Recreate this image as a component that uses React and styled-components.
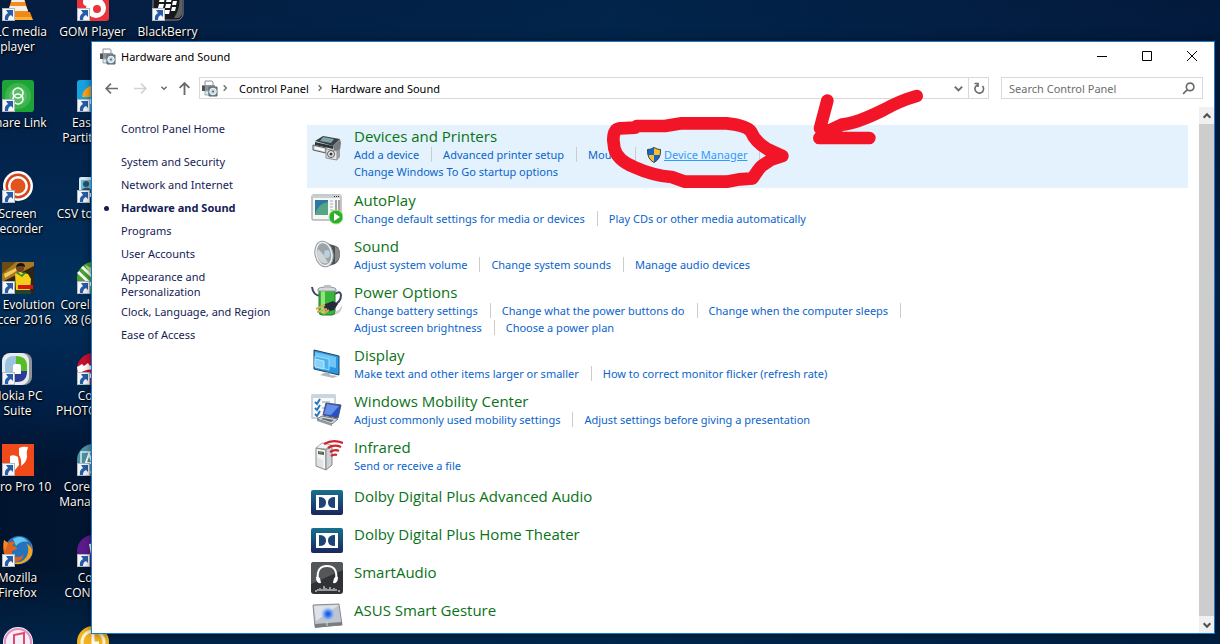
import React, {useState} from 'react';
import styled, {createGlobalStyle} from 'styled-components';

const GlobalStyle = createGlobalStyle`
    * {
        box-sizing: border-box;
    }
    body {
        margin: 0;
        overflow: hidden;
        font-family: "Noto Sans", "Open Sans", sans-serif;
        font-size: 11px;
    }
    button {
        font: inherit;
        border: 0;
        padding: 0;
        background: none;
        color: inherit;
    }
    svg {
        display: block;
        flex: none;
    }
`

const Desktop = styled.main`
    position: relative;
    height: 100vh;
    overflow: hidden;
    background: linear-gradient(90deg, rgba(0, 30, 70, 0) 0%, rgba(0, 44, 84, 0.5) 50%, rgba(0, 20, 50, 0.3) 100%),
        linear-gradient(180deg, #041c40 0%, #02224a 22%, #01305c 45%, #012048 62%, #011430 72%, #01142e 88%, #012347 100%);
`
const Shortcuts = styled.div`
    display: grid;
    grid-template-columns: repeat(3, 75px);
    grid-auto-rows: 91px;
    margin: -11px 0 0 -20px;
`
const Shortcut = styled.button`
    grid-column: ${(p) => p.$col};
    grid-row: ${(p) => p.$row};
    display: flex;
    flex-direction: column;
    align-items: center;
    gap: 3px;
    color: white;
    font-family: "Open Sans", "Noto Sans", sans-serif;
    font-size: 12px;
    line-height: 15px;
    text-shadow: 1px 1px 2px black, 0 1px 2px black;
    white-space: pre;
`
const Window = styled.section`
    position: absolute;
    top: 41px;
    right: 5px;
    bottom: 10px;
    left: 91px;
    display: flex;
    flex-direction: column;
    background: white;
    border: 1px solid #1979ca;
    box-shadow: 0 0 8px rgba(0, 0, 0, 0.5);
`
const TitleBar = styled.header`
    display: flex;
    align-items: center;
    height: 28px;
    padding-left: 7px;
    gap: 5px;
`
const WindowTitle = styled.h1`
    flex: 1;
    margin: 0;
    font-size: 11px;
    font-weight: normal;
    color: black;
`
const Caption = styled.div`
    display: flex;
    align-self: stretch;
`
const CaptionButton = styled.button`
    display: grid;
    place-items: center;
    width: 45px;
    &:hover{
        background: #e5e5e5;
    }
`
const NavBar = styled.div`
    display: flex;
    align-items: center;
    padding: 7px 11px 0 9px;
`
const NavButton = styled.button`
    display: grid;
    place-items: center;
    width: ${(p) => p.$w}px;
    height: 22px;
`
const AddressBar = styled.div`
    flex: 1;
    display: flex;
    align-items: center;
    height: 22px;
    padding-left: 1px;
    border: 1px solid #d9d9d9;
`
const Crumb = styled.button`
    margin: 0 7px;
    color: black;
`
const AddressButton = styled.button`
    display: grid;
    place-items: center;
    width: 20px;
    height: 20px;
    margin-left: ${(p) => (p.$end ? 'auto' : '0')};
    border-left: ${(p) => (p.$end ? '0' : '1px solid #d9d9d9')};
`
const SearchBox = styled.form`
    display: flex;
    align-items: center;
    width: 202px;
    height: 22px;
    margin-left: 12px;
    padding: 0 7px;
    border: 1px solid #d9d9d9;
`
const SearchInput = styled.input`
    flex: 1;
    min-width: 0;
    padding: 0;
    border: 0;
    outline: 0;
    font: inherit;
    color: #333;
    &::placeholder{
        color: #6d6d6d;
        opacity: 1;
    }
`
const Body = styled.div`
    flex: 1;
    display: flex;
    min-height: 0;
    margin-top: 6px;
`
const Sidebar = styled.nav`
    width: 215px;
    padding: 16px 20px 0 29px;
    flex: none;
`
const SideList = styled.ul`
    list-style: none;
    margin: 18px 0 0;
    padding: 0;
`
const SideItem = styled.li`
    position: relative;
    margin-bottom: ${(p) => (p.$tight ? '5px' : '8px')};
    line-height: 15px;
    white-space: pre-line;
    &::before{
        content: '';
        display: ${(p) => (p.$current ? 'block' : 'none')};
        position: absolute;
        top: 6px;
        left: -17px;
        width: 5px;
        height: 5px;
        border-radius: 50%;
        background: #151c55;
    }
`
const SideLink = styled.a`
    color: #151c55;
    font-weight: ${(p) => (p.$current ? 'bold' : 'normal')};
    line-height: 15px;
    text-decoration: none;
    white-space: ${(p) => (p.$current ? 'nowrap' : 'inherit')};
`
const Categories = styled.div`
    flex: 1;
    min-width: 0;
    padding: 20px 11px 0 0;
    overflow: hidden;
`
const Category = styled.section`
    display: flex;
    gap: 11px;
    padding: 2px 0 8px 4px;
    margin-bottom: ${(p) => (p.$active ? '1px' : '0')};
    background: ${(p) => (p.$active ? '#e3f2fd' : 'none')};
`
const CategoryIcon = styled.div`
    height: 34px;
    padding-top: 2px;
    margin-bottom: -2px;
`
const Extras = styled.div`
    padding-top: 3px;
`
const Extra = styled.section`
    display: flex;
    gap: 11px;
    height: 38px;
    padding: 1px 0 0 4px;
`
const CategoryTitle = styled.h2`
    margin: 0 0 1px;
    font-family: "Open Sans", "Noto Sans", sans-serif;
    font-size: 15px;
    font-weight: normal;
    line-height: ${(p) => (p.$alone ? '20px' : '18px')};
    a {
        color: #0a7216;
        text-decoration: none;
    }
`
const TaskRow = styled.div`
    display: flex;
    align-items: center;
    height: 17px;
    white-space: nowrap;
`
const Task = styled.a`
    display: flex;
    align-items: center;
    gap: 3px;
    color: ${(p) => (p.$hot ? '#3399ff' : '#0a64cc')};
    text-decoration: ${(p) => (p.$hot ? 'underline' : 'none')};
    line-height: 17px;
    &:hover{
        text-decoration: underline;
    }
`
const Divider = styled.span`
    width: 1px;
    height: 15px;
    margin: 0 11px 0 12px;
    background: #cccccc;
`
const ScrollBar = styled.div`
    display: flex;
    flex-direction: column;
    width: 15px;
    padding-top: 2px;
`
const ScrollButton = styled.button`
    display: grid;
    place-items: center;
    height: 17px;
    background: #f0f0f0;
`
const ScrollThumb = styled.div`
    flex: 1;
    background: #cdcdcd;
`
const Marker = styled.svg`
    position: absolute;
    top: 80px;
    left: 590px;
    pointer-events: none;
    fill: none;
    stroke: #f21528;
    stroke-width: 38;
    stroke-linecap: round;
    stroke-linejoin: round;
`

// desktop pictures, all on a 32x32 grid
const pictures = {
    vlc: <>
        <path d="M13 0h6l8 25H5z" fill="#f58a1f"/>
        <path d="M11 7h10l2 6H9z" fill="#eee"/><path d="M8 17h16l2 5H6z" fill="#f3f0ec"/>
        <path d="M4 23h24l3 8H1z" fill="#f08a12"/><path d="M3 28h26l2 3H1z" fill="#ffb03c"/>
    </>,
    gom: <>
        <rect width="32" height="32" rx="3" fill="#e8343a"/>
        <circle cx="19" cy="19" r="10" fill="#fff"/><circle cx="20" cy="20" r="4" fill="#e8343a"/>
        <circle cx="10" cy="13" r="4" fill="#fff"/>
    </>,
    blackberry: <>
        <rect x="1" width="30" height="31" rx="6" fill="#17191b" stroke="#888" strokeWidth="1"/>
        <path d="M25 2c4 8 3 18-3 27h4q4-1 4-5V6q0-3-5-4z" fill="#5d6063"/>
        <g fill="#fff">
            <path d="M8 9h5l-1 4H7zM15 9h5l-1 4h-5zM7 15h5l-1 4H6zM14 15h5l-1 4h-5zM21 12h4l-1 4h-4zM20 18h4l-1 4h-4zM13 21h5l-1 4h-5z"/>
        </g>
    </>,
    share: <>
        <rect width="32" height="32" rx="3" fill="#1ea336"/>
        <circle cx="16" cy="16" r="13" fill="#3cb44d"/><circle cx="16" cy="16" r="9" fill="#55c063"/>
        <g fill="none" stroke="#fff" strokeWidth="1.5"><circle cx="16" cy="13" r="5"/><circle cx="16" cy="19" r="5"/></g>
    </>,
    easeus: <>
        <rect width="32" height="32" rx="3" fill="#17a3e0"/>
        <path d="M5 17A12 12 0 0 1 20 6l-4 11z" fill="#f9a51c"/>
        <path d="M6 19h20v5H6z" fill="#d9f1fb"/>
    </>,
    recorder: <>
        <circle cx="16" cy="15" r="15" fill="#fff"/><circle cx="16" cy="15" r="12.500" fill="#d64319"/>
        <circle cx="16" cy="15" r="10" fill="#fff"/><circle cx="16" cy="15" r="7.500" fill="#e1531f"/>
    </>,
    csv: <>
        <rect x="2" y="6" width="28" height="20" rx="2" fill="#d7ecf5"/>
        <rect x="4" y="9" width="11" height="13" fill="#6fb8d8"/>
        <circle cx="9" cy="13" r="3" fill="#24536b"/><path d="M4 22c0-7 11-7 11 0z" fill="#24536b"/>
    </>,
    soccer: <>
        <rect width="32" height="32" fill="#302515"/>
        <path d="M0 0h32v4L0 20z" fill="#a97a1e"/><path d="M0 0h14L0 12z" fill="#6b4c12"/><path d="M2 12l14-7v3L3 16z" fill="#f0cd62"/>
        <circle cx="18" cy="6" r="4" fill="#6d4124"/><path d="M14 5q1-4 5-4t4 4q-4-2-9 0z" fill="#1b120c"/>
        <path d="M13 12l5-2 8 2 3 5-1 11-14 1z" fill="#f3cf18"/><path d="M16 10l3 3 4-3 1 1-4 4-6-4z" fill="#238a3c"/>
        <path d="M16 23h15v4H16z" fill="#d3181a"/><path d="M13 28h16v4H13z" fill="#23452c"/>
    </>,
    draw: <>
        <circle cx="16" cy="16" r="16" fill="#48a52d"/>
        <path d="M1 10l20 19M5 5l22 20" stroke="#fff" strokeWidth="3"/><path d="M8 3l9 4-3 6z" fill="#b7e08c"/>
    </>,
    nokia: <>
        <rect x="4" y="0" width="26" height="32" rx="8" fill="#8f9497"/>
        <rect x="0" y="0" width="27" height="32" rx="8" fill="#e9ecee"/>
        <path d="M3 12q0-9 9-9h2v8q-3 0-3 5v5H3z" fill="#9bc2df"/>
        <path d="M14 3q11 0 11 10v8h-6v-6q0-4-5-4z" fill="#57bd27"/>
        <path d="M11 21h8v-3h6q0 11-10 11h-4z" fill="#2d3b98"/><rect x="11" y="11" width="8" height="10" rx="2" fill="#fff"/>
    </>,
    photo: <>
        <circle cx="16" cy="16" r="16" fill="#c8102e"/>
        <path d="M0 14l5-3 2 2 4-3 2 3 5-4v8q-8-2-17 4z" fill="#fff"/><path d="M4 25q6-6 12-4v4z" fill="#fff"/>
    </>,
    nitro: <>
        <rect width="32" height="32" fill="#f04a1a"/>
        <path d="M17 4q4-2 9-1-2 5-1 10-1 6-6 9 1-6-2-11z" fill="#fff"/><path d="M8 12q4-2 8 1l1 8-4 5q-1-3-5-5z" fill="#fff"/>
    </>,
    font: <>
        <circle cx="16" cy="16" r="16" fill="#4a93a3"/>
        <path d="M4 8h15v20H4z" fill="none" stroke="#d6eef1" strokeWidth="1.500"/>
        <path d="M7 24l5-14 5 14M9 19h6" fill="none" stroke="#fff" strokeWidth="2"/>
    </>,
    firefox: <>
        <circle cx="17" cy="15" r="14" fill="#2473bd"/><path d="M11 4q9-5 15 3-7-2-12 4z" fill="#66c5ec"/>
        <path d="M2 5l4 3q3-2 7-1l-3 4q5 0 5 3l-5 2q-1 6 5 6 5 0 7-3-2 8-10 8C4 27-1 17 2 5z" fill="#e2621c"/>
        <path d="M29 8q5 15-8 20-7 3-13-1 15 3 18-9 1-5-1-9 3 1 5 6z" fill="#f9a41b"/>
        <path d="M2 5l4 3-3 8q-2-5-1-11z" fill="#f68a1e"/>
    </>,
    connect: <>
        <circle cx="16" cy="16" r="16" fill="#5c1c8c"/>
        <path d="M12 9q8-2 10 5l-8 6z" fill="#fff"/>
    </>,
    itunes: <>
        <circle cx="16" cy="16" r="15" fill="#f4eef6"/><circle cx="16" cy="16" r="13" fill="none" stroke="#e58fc0" strokeWidth="2"/>
        <path d="M12 21V9l10-2v12" fill="none" stroke="#e0486f" strokeWidth="2"/>
    </>,
    clock: <>
        <circle cx="16" cy="16" r="16" fill="#f2b321"/><circle cx="16" cy="16" r="11" fill="none" stroke="#fff3cf" strokeWidth="3"/>
        <path d="M16 8v9h6" fill="none" stroke="#fff" strokeWidth="3"/>
    </>,
}

const shortcuts = [
    {col: 1, row: 1, pic: 'vlc', label: 'VLC media\nplayer'},
    {col: 2, row: 1, pic: 'gom', label: 'GOM Player'},
    {col: 3, row: 1, pic: 'blackberry', label: 'BlackBerry'},
    {col: 1, row: 2, pic: 'share', label: 'Share Link'},
    {col: 2, row: 2, pic: 'easeus', label: 'EaseUS\nPartition ...'},
    {col: 1, row: 3, pic: 'recorder', label: 'Screen\nRecorder'},
    {col: 2, row: 3, pic: 'csv', label: 'CSV to vCard'},
    {col: 1, row: 4, pic: 'soccer', label: 'Pro Evolution\nSoccer 2016'},
    {col: 2, row: 4, pic: 'draw', label: 'CorelDRAW\nX8 (64-Bit)'},
    {col: 1, row: 5, pic: 'nokia', label: 'Nokia PC\nSuite'},
    {col: 2, row: 5, pic: 'photo', label: 'Corel\nPHOTO-PAI...'},
    {col: 1, row: 6, pic: 'nitro', label: 'Nitro Pro 10'},
    {col: 2, row: 6, pic: 'font', label: 'Corel Font\nManager X8'},
    {col: 1, row: 7, pic: 'firefox', label: 'Mozilla\nFirefox'},
    {col: 2, row: 7, pic: 'connect', label: 'Corel\nCONNECT'},
    {col: 1, row: 8, pic: 'itunes', label: ''},
    {col: 2, row: 8, pic: 'clock', label: ''},
]

const sideLinks = [
    'System and Security',
    'Network and Internet',
    'Hardware and Sound',
    'Programs',
    'User Accounts',
    'Appearance and\nPersonalization',
    'Clock, Language, and Region',
    'Ease of Access',
]

// control panel pictures
const icons = {
    printers: <>
        <path d="M3 8l8-5 17 3-7 7z" fill="#3c4144"/><path d="M11 4l11 2-3 4-11-2z" fill="#7fa5a8"/>
        <path d="M3 9l18 4v3L3 12z" fill="#2e3336"/><path d="M21 13l7-7 1 4-1 7-6 2z" fill="#767c80"/>
        <path d="M1 12l13 3v5L1 17z" fill="#d9dcdd" stroke="#55595b"/><path d="M3 14l9 2v2l-9-2z" fill="#fff"/>
        <path d="M14 16l11 2v9l-11-2z" fill="#e2e4e5" stroke="#8b9092"/><circle cx="19" cy="21" r="3.500" fill="#eee" stroke="#555"/>
        <circle cx="19" cy="21" r="1.500" fill="#333"/><path d="M25 18l3-2v8l-3 3z" fill="#9a9fa2"/>
    </>,
    autoplay: <>
        <rect x="1" y="2" width="29" height="25" rx="1" fill="#f6f7f7" stroke="#8c8f91"/>
        <path d="M1 2h29v3H1z" fill="#c9ced1"/><path d="M23 3h1v1h-1zM25 3h1v1h-1zM27 3h1v1h-1z" fill="#333"/>
        <rect x="4" y="7" width="13" height="15" fill="#2f78a5"/><path d="M4 22q2-11 13-13v13z" fill="#56a583"/>
        <path d="M19 8h3M19 11h3M19 14h3M19 17h3M19 20h3" stroke="#a6afb5"/><path d="M25 7v12M28 7v12" stroke="#888" strokeWidth="1.500"/>
        <circle cx="25" cy="24" r="7" fill="#2eae29" stroke="#a8e28e"/><path d="M23 20l6 4-6 4z" fill="#fff"/>
    </>,
    sound: <>
        <path d="M15 4l10 3q4 2 4 8 0 7-5 10l-9 3z" fill="#4c5053"/><path d="M24 7q5 3 5 8t-5 9z" fill="#85898b"/>
        <ellipse cx="13" cy="15" rx="9" ry="13" transform="rotate(-12 13 15)" fill="#eceeef" stroke="#96999b"/>
        <ellipse cx="13" cy="15" rx="7" ry="11" transform="rotate(-12 13 15)" fill="#9ba4a9"/>
        <path d="M7 10q7 6 10 14-7 2-10-5-2-5 0-9z" fill="#cfd4d7"/><ellipse cx="16" cy="15" rx="3" ry="4" fill="#b9d0da"/>
    </>,
    power: <>
        <path d="M1 2q1 8 8 9M24 9q5-4 6 1 0 7-7 10" fill="none" stroke="#404565" strokeWidth="2"/>
        <rect x="8" y="3" width="16" height="27" rx="3" fill="#36b53a" stroke="#237f2a"/><rect x="10" y="5" width="4" height="23" fill="#91e479"/>
        <path d="M7 4q1-2 9-2t9 2v2H7z" fill="#d5dadd" stroke="#92989c"/><rect x="13" y="0" width="7" height="3" rx="1" fill="#b7bec5"/>
        <path d="M12 20l10-4 5 3-4 6-8 2z" fill="#252b38"/><path d="M5 24l9-4M6 27l10-3M12 29l6-4" stroke="#d8ad56" strokeWidth="2"/>
        <path d="M24 30q8-3 7-10-2 5-7 7z" fill="#ccd0d2"/>
    </>,
    display: <>
        <path d="M3 2l25 6v19L3 21z" fill="#2898e4" stroke="#27435a"/><path d="M4 4l21 5v11L4 15z" fill="#70c5f5"/>
        <path d="M4 8l14 3v11L4 18z" fill="#4baff0" stroke="#9bdcff"/><path d="M4 11l9 2v8l-9-2z" fill="#89d1f8" stroke="#b6e8ff"/>
        <path d="M15 24l4 1v2l8 1-5 2-13-3z" fill="#b1b9be"/>
    </>,
    mobility: <>
        <rect x="1" y="1" width="23" height="23" fill="#f9fafb" stroke="#a1acb5"/><path d="M1 1h23v3H1z" fill="#c9d5df"/>
        <path d="M4 8l2 2 3-5M4 14l2 2 3-5M4 20l2 2 3-5" fill="none" stroke="#2676b8" strokeWidth="2"/>
        <path d="M11 8h8M11 14h5" stroke="#8d9ca8"/>
        <path d="M15 9l15 2-3 13-15-3z" fill="#2851c7" stroke="#4d5560"/><path d="M16 10l12 2-8 9-7-1z" fill="#6590ea"/>
        <path d="M11 22l16 3-6 5-15-5z" fill="#d6dade" stroke="#6f757b"/><path d="M12 24l11 2-3 2-10-3z" fill="#646c73"/><path d="M6 25l15 5v2L6 27z" fill="#9299a0"/>
    </>,
    infrared: <>
        <path d="M5 8l6-5 9 2-5 4z" fill="#f4f5f6" stroke="#aaa"/><path d="M5 8l10 2v20L5 26z" fill="#f3f4f5" stroke="#858789"/>
        <path d="M15 10l6-5v20l-6 5z" fill="#cfd2d4" stroke="#858789"/><path d="M7 11l6 1v3l-6-1z" fill="#59615c"/><path d="M8 12h3" stroke="#62d347"/>
        <path d="M7 18v8M9 19v8M11 20v8" stroke="#cdd0d1"/>
        <path d="M13 4q9-5 19-1M17 8q6-4 13-1M19 12q5-3 9-1M20 16q3-2 6-1" fill="none" stroke="#cc2631" strokeWidth="2.200"/>
    </>,
    dolby: <>
        <defs>
            <linearGradient id="dolbyBlue" x1="0" y1="0" x2="0" y2="1">
                <stop offset="0" stopColor="#18708e"/><stop offset="1" stopColor="#19265e"/>
            </linearGradient>
        </defs>
        <rect y="4" width="32" height="25" rx="2" fill="url(#dolbyBlue)"/>
        <rect x="5" y="9" width="22" height="15" fill="#fff"/>
        <path d="M8 11q7 0 7 5.500T8 22zM24 11q-7 0-7 5.500T24 22z" fill="#1b4478"/>
    </>,
    smart: <>
        <rect width="32" height="32" rx="3" fill="#303235"/><path d="M3 0h26q3 0 3 3v5L0 22V3q0-3 3-3z" fill="#54575a"/>
        <path d="M7 18q-2-14 9-14t9 14" fill="none" stroke="#fff" strokeWidth="2"/>
        <path d="M5 15q4-2 5 6-5 1-5-6zM27 15q-4-2-5 6 5 1 5-6z" fill="#fff"/>
        <path d="M4 29h2M7 29v-2M9 29v-3M11 29v-2M13 29v-5M15 29v-3M17 29v-2M19 29v-4M21 29v-2M23 29v-3M25 29v-2M27 29h2" stroke="#fff"/>
    </>,
    asus: <>
        <defs>
            <radialGradient id="touchGlow"><stop offset="0" stopColor="#0a43e5"/><stop offset="0.4" stopColor="#4b8af1"/><stop offset="1" stopColor="#bed7f6" stopOpacity="0"/></radialGradient>
        </defs>
        <path d="M2 5l26-1 3 21-27 2z" fill="#bfc5cc" stroke="#868b92"/><path d="M3 6l25-1-23 16z" fill="#dfe3e8"/>
        <path d="M4 24l27-2v3L4 28z" fill="#777d84"/><path d="M16 22v4" stroke="#d8dce0"/><circle cx="17" cy="14" r="8" fill="url(#touchGlow)"/>
    </>,
}

const categories = [
    {icon: 'printers', title: 'Devices and Printers', active: true, rows: [
        ['Add a device', 'Advanced printer setup', 'Mouse', 'Device Manager'],
        ['Change Windows To Go startup options'],
    ]},
    {icon: 'autoplay', title: 'AutoPlay', rows: [['Change default settings for media or devices', 'Play CDs or other media automatically']]},
    {icon: 'sound', title: 'Sound', rows: [['Adjust system volume', 'Change system sounds', 'Manage audio devices']]},
    {icon: 'power', title: 'Power Options', rows: [
        ['Change battery settings', 'Change what the power buttons do', 'Change when the computer sleeps'],
        ['Adjust screen brightness', 'Choose a power plan'],
    ]},
    {icon: 'display', title: 'Display', rows: [['Make text and other items larger or smaller', 'How to correct monitor flicker (refresh rate)']]},
    {icon: 'mobility', title: 'Windows Mobility Center', rows: [['Adjust commonly used mobility settings', 'Adjust settings before giving a presentation']]},
    {icon: 'infrared', title: 'Infrared', rows: [['Send or receive a file']]},
]

const extras = [
    {icon: 'dolby', title: 'Dolby Digital Plus Advanced Audio'},
    {icon: 'dolby', title: 'Dolby Digital Plus Home Theater'},
    {icon: 'smart', title: 'SmartAudio'},
    {icon: 'asus', title: 'ASUS Smart Gesture'},
]

function ShortcutPicture({name}){
    return(
        <svg width="32" height="32" viewBox="0 0 32 32" aria-hidden="true">
            {pictures[name]}
            <rect x="0.500" y="19.500" width="12" height="12" fill="#f4f6f9" stroke="#b4b8bf"/>
            <path d="M4 21h7v7l-2-2q-3 1-3 5H3q-1-5 3-7z" fill="#285ca8"/>
        </svg>
    );
}

function PrinterCamera(){
    return(
        <svg width="17" height="17" viewBox="0 0 17 17" aria-hidden="true">
            <path d="M4 5V1h7l1 1v3" fill="#fff" stroke="#898e92"/>
            <path d="M1 5h13v6H1z" fill="#8d959b"/><path d="M1 6h3v5H1z" fill="#4d5357"/>
            <path d="M4 11h4v4H4z" fill="#dcebf3" stroke="#9aabb5"/>
            <path d="M8 7h8v9H8z" fill="#788890" stroke="#59666d"/>
            <circle cx="12" cy="11.500" r="3.300" fill="#c7dbe3" stroke="#edf4f6"/><circle cx="12" cy="11.500" r="1" fill="#53656e"/>
        </svg>
    );
}

function Shield(){
    return(
        <svg width="14" height="16" viewBox="0 0 14 16" aria-hidden="true">
            <path d="M7 0.500q3 2 6.500 2Q14 12 7 15.500 0 12 0.500 2.500 4 2.500 7 0.500z" fill="#1765c0"/>
            <path d="M7 0.500q3 2 6.500 2V8H7zM0.800 8H7v7.500Q2 13 0.800 8z" fill="#f9be31"/>
            <path d="M7 0.500q3 2 6.500 2Q14 12 7 15.500 0 12 0.500 2.500 4 2.500 7 0.500z" fill="none" stroke="#3a4350"/>
        </svg>
    );
}

function Glyph({d, size = 12, color = '#6b6b6b', width = 1.5}){
    return(
        <svg width={size} height={size} viewBox="0 0 12 12" fill="none" stroke={color} strokeWidth={width} aria-hidden="true">
            <path d={d}/>
        </svg>
    );
}

function CategoryPicture({name}){
    return(
        <CategoryIcon>
            <svg width="32" height="32" viewBox="0 0 32 32" aria-hidden="true">
                {name === 'printers' ? <g transform="translate(1 4)">{icons[name]}</g> : icons[name]}
            </svg>
        </CategoryIcon>
    );
}

function TaskLinks({tasks, more}){
    return(
        <TaskRow>
            {tasks.map((task, i) => (
                <React.Fragment key={task}>
                    <Task href="#" $hot={task === 'Device Manager'}>
                        {task === 'Device Manager' && <Shield/>}
                        {task}
                    </Task>
                    {(more || i < tasks.length - 1) && <Divider/>}
                </React.Fragment>
            ))}
        </TaskRow>
    );
}

function App(){
    const [search, setSearch] = useState("");

    return(
        <Desktop>
            <GlobalStyle/>
            <Shortcuts>
                {shortcuts.map((s) => (
                    <Shortcut key={s.pic} $col={s.col} $row={s.row} aria-label={s.label || s.pic}>
                        <ShortcutPicture name={s.pic}/>
                        {s.label}
                    </Shortcut>
                ))}
            </Shortcuts>
            <Window>
                <TitleBar>
                    <PrinterCamera/>
                    <WindowTitle>Hardware and Sound</WindowTitle>
                    <Caption>
                        <CaptionButton aria-label="Minimize"><Glyph d="M1 6.500h10" color="#000" width={1}/></CaptionButton>
                        <CaptionButton aria-label="Maximize"><Glyph d="M1.500 1.500h9v9h-9z" color="#000" width={1}/></CaptionButton>
                        <CaptionButton aria-label="Close"><Glyph d="M1 1l10 10M11 1L1 11" color="#000" width={1}/></CaptionButton>
                    </Caption>
                </TitleBar>
                <NavBar>
                    <NavButton $w={20} aria-label="Back"><Glyph size={13} d="M12 6H1M5.500 1.500L1 6l4.500 4.500"/></NavButton>
                    <NavButton $w={38} aria-label="Forward" disabled><Glyph size={13} color="#d2d2d2" d="M0 6h11M6.500 1.500L11 6l-4.500 4.500"/></NavButton>
                    <NavButton $w={10} aria-label="Recent pages"><Glyph size={8} d="M2 4l4 4 4-4" width={2}/></NavButton>
                    <NavButton $w={30} aria-label="Up"><Glyph size={13} d="M6 12V1M1.500 5.500L6 1l4.500 4.500" width={1.7}/></NavButton>
                    <AddressBar>
                        <PrinterCamera/>
                        <NavButton $w={14} aria-label="Locations"><Glyph size={8} d="M4 2l4 4-4 4" width={2}/></NavButton>
                        <Crumb>Control Panel</Crumb>
                        <Glyph size={8} d="M4 2l4 4-4 4" width={2}/>
                        <Crumb>Hardware and Sound</Crumb>
                        <AddressButton $end aria-label="Previous locations"><Glyph size={11} d="M2 4l4 4 4-4" width={2}/></AddressButton>
                        <AddressButton aria-label="Refresh"><Glyph d="M9.500 4a4.300 4.300 0 1 1-5-1.100M1.500 1.500H5V5" width={1.6}/></AddressButton>
                    </AddressBar>
                    <SearchBox onSubmit={(e) => e.preventDefault()}>
                        <SearchInput
                        value={search}
                        aria-label="Search Control Panel"
                        placeholder="Search Control Panel"
                        onChange={(e) => {
                            setSearch(e.target.value);
                        }}/>
                        <button aria-label="Search"><Glyph size={13} d="M1 11l4-4M11 4.500a3.500 3.500 0 1 1-7 0a3.500 3.500 0 1 1 7 0"/></button>
                    </SearchBox>
                </NavBar>
                <Body>
                    <Sidebar>
                        <SideLink href="#">Control Panel Home</SideLink>
                        <SideList>
                            {sideLinks.map((name) => (
                                <SideItem key={name} $current={name === 'Hardware and Sound'} $tight={name.includes('\n')}>
                                    <SideLink href="#" $current={name === 'Hardware and Sound'}>{name}</SideLink>
                                </SideItem>
                            ))}
                        </SideList>
                    </Sidebar>
                    <Categories>
                        {categories.map((c) => (
                            <Category key={c.title} $active={c.active}>
                                <CategoryPicture name={c.icon}/>
                                <div>
                                    <CategoryTitle><a href="#">{c.title}</a></CategoryTitle>
                                    {c.rows.map((tasks, i) => (
                                        <TaskLinks key={i} tasks={tasks} more={i < c.rows.length - 1}/>
                                    ))}
                                </div>
                            </Category>
                        ))}
                        <Extras>
                            {extras.map((c) => (
                                <Extra key={c.title}>
                                    <svg width="32" height="32" viewBox="0 0 32 32" aria-hidden="true">{icons[c.icon]}</svg>
                                    <CategoryTitle $alone><a href="#">{c.title}</a></CategoryTitle>
                                </Extra>
                            ))}
                        </Extras>
                    </Categories>
                    <ScrollBar>
                        <ScrollButton aria-label="Scroll up"><Glyph size={10} d="M2 8l4-4 4 4" color="#505050" width={2.5}/></ScrollButton>
                        <ScrollThumb/>
                        <ScrollButton aria-label="Scroll down"><Glyph size={10} d="M2 4l4 4 4-4" color="#505050" width={2.5}/></ScrollButton>
                    </ScrollBar>
                </Body>
            </Window>
            <Marker width="350" height="120" viewBox="0 0 1050 360" aria-hidden="true">
                <path d="M135 143L90 145Q70 148 70 180L73 205Q82 240 130 260 190 287 245 291L285 305H410L450 298 488 295Q503 270 515 258L545 238 577 228 530 206Q495 185 483 155 470 136 410 130H275L225 138H140"/>
                <path d="M712 62L690 145M980 48Q930 62 880 90 800 130 755 134L710 155 688 174H838"/>
            </Marker>
        </Desktop>
    );
}
export default App;
